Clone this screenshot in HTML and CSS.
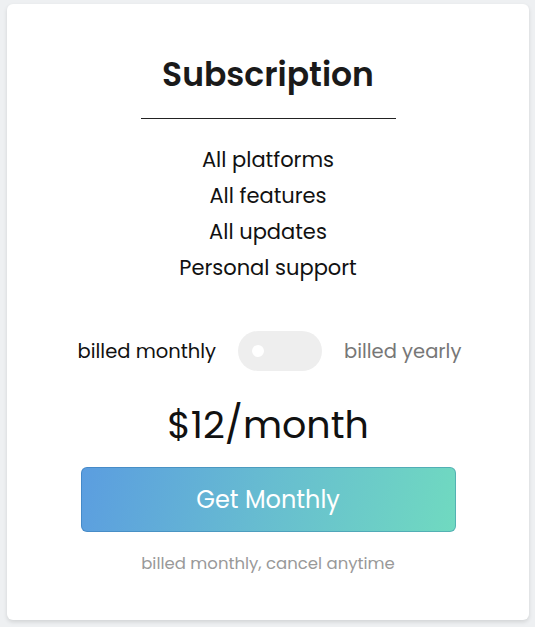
FILE: index.html
```html
<!doctype html>
<html lang="en">
<head>
    <meta charset="UTF-8">
    <title>Subscription</title>
    <link rel="stylesheet" href="styles.css">
</head>
<body>
    <div class="card">
        <h1 class="card-title">Subscription</h1>
        <div class="card-rule"></div>
        <ul class="features">
            <li>All platforms</li>
            <li>All features</li>
            <li>All updates</li>
            <li>Personal support</li>
        </ul>
        <div class="billing">
            <span class="billing-label active">billed monthly</span>
            <div class="switch"><span class="switch-knob"></span></div>
            <span class="billing-label">billed yearly</span>
        </div>
        <div class="price">$12/month</div>
        <button class="btn-get">Get Monthly</button>
        <p class="note">billed monthly, cancel anytime</p>
    </div>
</body>
</html>
```

FILE: styles.css
```css
*{
    padding: 0;
    margin: 0;
    box-sizing: border-box;
}
body{
    background: #eef0f2;
    padding: 4px 6px 7px 7px;
    font-family: "Poppins", "Open Sans", "DejaVu Sans", sans-serif;
    color: #111;
}
.card{
    height: 616px;
    background: #fff;
    border-radius: 6px;
    box-shadow: 0 2px 4px rgba(0, 0, 0, .12);
    display: flex;
    flex-direction: column;
    align-items: center;
    padding-top: 51px;
}
.card-title{
    font-size: 33px;
    line-height: 40px;
    font-weight: 600;
    color: #1a1a1a;
}
.card-rule{
    width: 255px;
    height: 1px;
    background: #222;
    margin-top: 23px;
}
.features{
    list-style: none;
    text-align: center;
    margin-top: 23px;
    font-size: 21px;
    line-height: 36px;
}
.billing{
    display: flex;
    align-items: center;
    gap: 22px;
    margin-top: 45px;
    padding-left: 3px;
    font-size: 19.5px;
}
.billing-label{
    color: #777;
}
.billing-label.active{
    color: #111;
}
.switch{
    width: 84px;
    height: 40px;
    border-radius: 20px;
    background: #eee;
    display: flex;
    align-items: center;
    padding-left: 14px;
}
.switch-knob{
    width: 12px;
    height: 12px;
    border-radius: 50%;
    background: #fff;
}
.price{
    margin-top: 30px;
    font-size: 38px;
    line-height: 48px;
    color: #111;
}
.btn-get{
    margin-top: 18px;
    width: 375px;
    height: 65px;
    border: 1px solid rgba(20, 90, 150, .3);
    border-radius: 6px;
    background: linear-gradient(105deg, #5b9de0 0%, #67bdd0 50%, #70dac0 100%) border-box;
    color: #fff;
    font-family: inherit;
    font-size: 24px;
}
.note{
    margin-top: 20px;
    font-size: 16.5px;
    line-height: 24px;
    color: #999;
}
```
